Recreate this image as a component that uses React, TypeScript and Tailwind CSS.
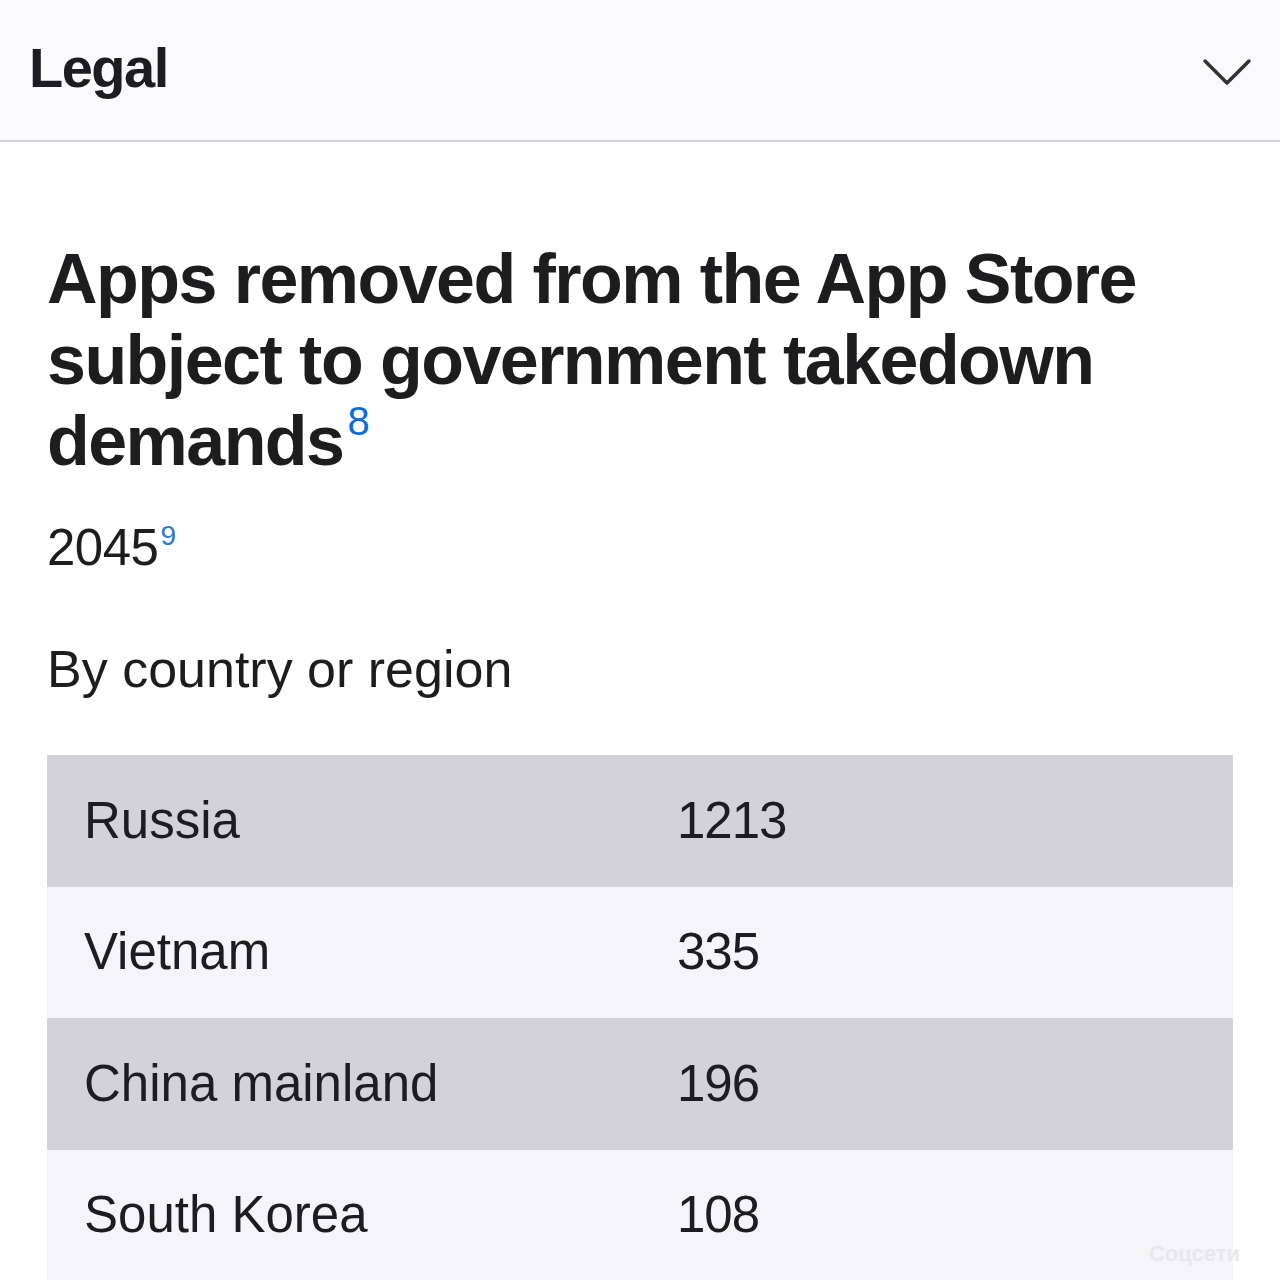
import React from "react";

const rows = [
  { name: "Russia", count: "1213" },
  { name: "Vietnam", count: "335" },
  { name: "China mainland", count: "196" },
  { name: "South Korea", count: "108" },
];

export default function App() {
  return (
    <div
      className="w-[1280px] h-[1280px] overflow-hidden bg-white text-[#1d1d1f] relative"
      style={{ fontFamily: '"Liberation Sans", Arial, sans-serif' }}
    >
      {/* accordion header */}
      <div className="h-[142px] bg-[#fafafc] border-b-2 border-[#d2d2d7] flex items-center justify-between pl-[29px] pr-[28px]">
        <h2 className="text-[56px] font-bold tracking-[-1.5px] leading-none mb-[4px]">Legal</h2>
        <svg width="50" height="30" viewBox="0 0 50 30" fill="none" className="mt-[2px]">
          <path d="M3 5 L25 27 L47 5" stroke="#333336" strokeWidth="3.5" strokeLinecap="round" strokeLinejoin="round" />
        </svg>
      </div>

      <div className="px-[47px] pt-[97px]">
        <h1 className="text-[70px] font-bold leading-[81px] tracking-[-1.55px]">
          Apps removed from the App Store subject to government takedown demands
          <sup className="text-[#0a6dd6] text-[40px] font-normal relative -top-[30px] ml-[4px]">8</sup>
        </h1>

        <p className="mt-[40px] text-[51px] leading-none font-normal tracking-[-0.5px]">
          2045<sup className="text-[#2a7bd0] text-[28px] relative -top-[20px] ml-[2px]">9</sup>
        </p>

        <p className="mt-[70px] text-[52px] leading-none">By country or region</p>

        <div className="mt-[60px] w-[1186px] flex flex-col">
          {rows.map((r, i) => (
            <div
              key={r.name}
              className={`h-[131.5px] flex items-center text-[51px] ${i % 2 === 0 ? "bg-[#d2d2d8]" : "bg-[#f5f5f7]"}`}
            >
              <span className="w-[630px] pl-[37px]">{r.name}</span>
              <span className="tracking-[-1px]">{r.count}</span>
            </div>
          ))}
        </div>
      </div>

      <span className="absolute right-[40px] bottom-[10px] text-[22px] text-[#e8e8ea] font-bold">Соцсети</span>
    </div>
  );
}
